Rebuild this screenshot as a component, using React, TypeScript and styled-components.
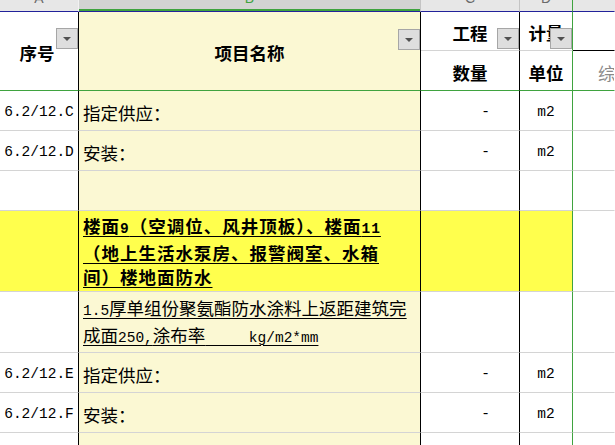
import React from "react";
import styled, { createGlobalStyle } from "styled-components";

const GREEN = "#3fa33f";
const GRID = "#d4d4d4";
const PALE = "#fbf8d3";
const YELLOW = "#ffff4d";
const INK = "#000";

const GlobalStyle = createGlobalStyle`
  html, body {
    margin: 0;
    padding: 0;
    background: #fff;
    overflow: hidden;
  }
`;

const Sheet = styled.div`
  display: grid;
  grid-template-columns: 79px 342px 99px 53px 42px;
  grid-template-rows: 12px 39px 40px 40px 40px 40px 81px 61px 40px 40px 40px;
  width: 615px;
  height: 445px;
  overflow: hidden;
  font-family: "Noto Sans CJK SC", sans-serif;
  font-size: 17.5px;
  color: ${INK};
`;

const Letter = styled.div<{ $active?: boolean; $edge?: string }>`
  box-sizing: border-box;
  overflow: hidden;
  background: ${(p) => (p.$active ? "#d3d3d3" : "#e7e7e7")};
  border-right: 1px solid ${(p) => p.$edge ?? "#c4c4c4"};
  border-bottom: 1px solid #22229a;
  box-shadow: ${(p) => (p.$active ? `inset 0 -2px 0 ${GREEN}` : "none")};
  color: ${(p) => (p.$active ? GREEN : "#6a6a6a")};
  font: 14px/14px "Liberation Sans", sans-serif;
  text-align: center;

  span {
    display: block;
    margin-top: -9px;
  }
`;

const HeadCell = styled.div<{ $bg: string; $span?: boolean; $edge: string; $base: string }>`
  position: relative;
  box-sizing: border-box;
  grid-row: ${(p) => (p.$span ? "span 2" : "auto")};
  background: ${(p) => p.$bg};
  border-right: 1px solid ${(p) => p.$edge};
  border-bottom: 1px solid ${(p) => p.$base};
  display: flex;
  align-items: center;
  justify-content: center;
  padding-top: 3px;
  font-weight: 700;
  white-space: nowrap;
  overflow: hidden;
`;

const FadedHead = styled(HeadCell)`
  justify-content: flex-start;
  padding-left: 25px;
  font-weight: 400;
  color: #8a8a8a;
`;

const FilterButton = styled.div<{ $top: number }>`
  position: absolute;
  right: 0;
  top: ${(p) => p.$top}px;
  width: 22px;
  height: 21px;
  box-sizing: border-box;
  border: 1px solid #a6a6a6;
  background: #dedede;
  display: flex;
  align-items: center;
  justify-content: center;

  &::after {
    content: "";
    width: 0;
    height: 0;
    border-left: 4px solid transparent;
    border-right: 4px solid transparent;
    border-top: 4px solid #505050;
  }
`;

const Cell = styled.div<{ $bg: string; $edge: string; $align?: "left" | "center" | "right" }>`
  box-sizing: border-box;
  background: ${(p) => p.$bg};
  border-right: 1px solid ${(p) => p.$edge};
  border-bottom: 1px solid ${GRID};
  display: flex;
  align-items: center;
  justify-content: ${(p) =>
    p.$align === "right" ? "flex-end" : p.$align === "center" ? "center" : "flex-start"};
  padding: 3px ${(p) => (p.$align === "right" ? "29px" : "4px")} 0 4px;
  white-space: nowrap;
  overflow: hidden;
`;

const Latin = styled.span`
  font-family: "Liberation Mono", monospace;
  font-size: 14.5px;
`;

const Para = styled.div<{ $bold?: boolean }>`
  line-height: 24px;
  white-space: pre;
  text-decoration: underline;
  text-underline-offset: 3px;
  text-decoration-thickness: 1px;
  font-weight: ${(p) => (p.$bold ? 700 : 400)};
  letter-spacing: ${(p) => (p.$bold ? "1px" : "0")};
  margin-top: -2px;
`;

type RowProps = {
  seq?: string;
  name?: React.ReactNode;
  qty?: string;
  unit?: string;
  fill?: string;
};

const Row = ({ seq, name, qty, unit, fill }: RowProps) => {
  const bg = fill ?? "#fff";
  return (
    <>
      <Cell $bg={bg} $edge="#000" $align="center">
        {seq && <Latin>{seq}</Latin>}
      </Cell>
      <Cell $bg={fill ?? PALE} $edge="#000">
        {name}
      </Cell>
      <Cell $bg={bg} $edge="#000" $align="right">
        {qty && <Latin>{qty}</Latin>}
      </Cell>
      <Cell $bg={bg} $edge={GREEN} $align="center">
        {unit && <Latin>{unit}</Latin>}
      </Cell>
      <Cell $bg="#fff" $edge="transparent" />
    </>
  );
};

export default function App() {
  return (
    <>
      <GlobalStyle />
      <Sheet>
        <Letter $edge="#f2f2f2">
          <span>A</span>
        </Letter>
        <Letter $active>
          <span>B</span>
        </Letter>
        <Letter>
          <span>C</span>
        </Letter>
        <Letter $edge={GREEN}>
          <span>D</span>
        </Letter>
        <Letter $edge="transparent" />

        <HeadCell $span $bg="#fff" $edge="#000" $base={GREEN}>
          <span style={{ marginRight: 4 }}>序号</span>
          <FilterButton $top={16} />
        </HeadCell>
        <HeadCell $span $bg={PALE} $edge="#000" $base={GREEN}>
          项目名称
          <FilterButton $top={17} />
        </HeadCell>
        <HeadCell $bg="#fff" $edge="#000" $base={GRID}>
          工程
          <FilterButton $top={16} />
        </HeadCell>
        <HeadCell $bg="#fff" $edge={GREEN} $base={GRID}>
          计量
          <FilterButton $top={16} />
        </HeadCell>
        <HeadCell $bg="#fff" $edge="transparent" $base="#000" />

        <HeadCell $bg="#fff" $edge="#000" $base={GREEN}>
          数量
        </HeadCell>
        <HeadCell $bg="#fff" $edge={GREEN} $base={GREEN}>
          单位
        </HeadCell>
        <FadedHead $bg="#fff" $edge="transparent" $base={GREEN}>
          综合单价
        </FadedHead>

        <Row seq="6.2/12.C" name="指定供应：" qty="-" unit="m2" />
        <Row seq="6.2/12.D" name="安装：" qty="-" unit="m2" />
        <Row />
        <Row
          fill={YELLOW}
          name={
            <Para $bold>
              楼面<Latin>9</Latin>（空调位、风井顶板）、楼面<Latin>11</Latin>
              {"\n"}（地上生活水泵房、报警阀室、水箱{"\n"}间）楼地面防水
            </Para>
          }
        />
        <Row
          name={
            <Para>
              <Latin>1.5</Latin>厚单组份聚氨酯防水涂料上返距建筑完{"\n"}成面<Latin>250,</Latin>涂布率
              <Latin>{"     kg/m2*mm"}</Latin>
            </Para>
          }
        />
        <Row seq="6.2/12.E" name="指定供应：" qty="-" unit="m2" />
        <Row seq="6.2/12.F" name="安装：" qty="-" unit="m2" />
        <Row />
      </Sheet>
    </>
  );
}
